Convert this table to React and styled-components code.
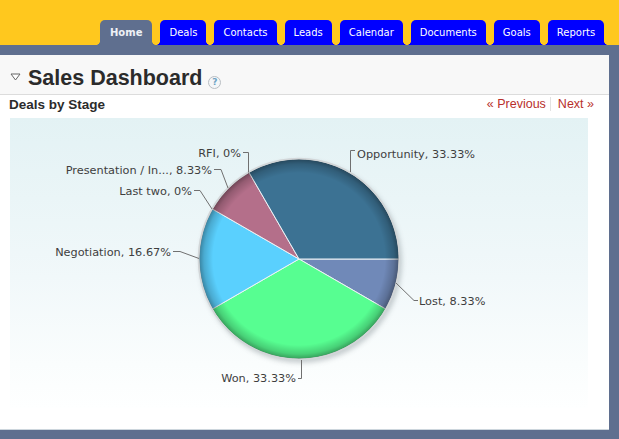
import styled, { createGlobalStyle } from 'styled-components';

const GlobalStyle = createGlobalStyle`
  html, body {
    margin: 0;
    padding: 0;
    background: #5F6F8F;
  }
`;

const SLATE = '#5F6F8F';
const BLUE = '#0000FF';

const Page = styled.div`
  width: 619px;
  height: 439px;
  background: ${SLATE};
  display: flex;
  flex-direction: column;
  overflow: hidden;
`;

const TopBar = styled.div`
  height: 45px;
  background: #FFC81E;
  display: flex;
  align-items: flex-end;
  gap: 8px;
  padding-left: 100px;
  box-sizing: border-box;
`;

const Tab = styled.a`
  position: relative;
  height: 25px;
  padding: 0 ${({ $active }) => ($active ? '10px' : '9px')};
  display: flex;
  align-items: center;
  background: ${({ $active }) => ($active ? SLATE : BLUE)};
  color: ${({ $active }) => ($active ? '#EEF1F6' : '#FFF')};
  font-family: "DejaVu Sans", Verdana, sans-serif;
  font-size: 10px;
  font-weight: ${({ $active }) => ($active ? 700 : 400)};
  border-radius: 5px 5px 0 0;
  text-decoration: none;

  &::before,
  &::after {
    content: '';
    position: absolute;
    bottom: 0;
    width: 4px;
    height: 4px;
  }
  &::before {
    left: -4px;
    background: radial-gradient(circle at 0 0, transparent 3.6px, ${({ $active }) => ($active ? SLATE : BLUE)} 4.2px);
  }
  &::after {
    right: -4px;
    background: radial-gradient(circle at 100% 0, transparent 3.6px, ${({ $active }) => ($active ? SLATE : BLUE)} 4.2px);
  }
`;

const Body = styled.div`
  flex: 1;
  padding: 10px 10px 9px 0;
  display: flex;
`;

const Panel = styled.div`
  flex: 1;
  background: #FFF;
  border-bottom: 1px solid #CDD6DD;
  display: flex;
  flex-direction: column;
`;

const Header = styled.div`
  height: 40px;
  box-sizing: border-box;
  padding: 10px 0 0 10px;
  background: #F8F8F8;
  border-bottom: 1px solid #DCDCDC;
  display: flex;
  align-items: flex-start;
`;

const Toggle = styled.svg`
  width: 11px;
  height: 8px;
  margin-top: 8px;
  margin-right: 7px;
`;

const Title = styled.h1`
  margin: 0;
  font-family: "Liberation Sans", Arial, sans-serif;
  font-size: 21.5px;
  font-weight: 700;
  line-height: 26px;
  color: #2B2B2B;
`;

const Help = styled.span`
  width: 11px;
  height: 11px;
  margin: 11px 0 0 6px;
  border: 1px solid #B9BEC3;
  border-radius: 50%;
  background: #F4F6F8;
  color: #6FA3C4;
  font-family: "DejaVu Sans", sans-serif;
  font-size: 9px;
  font-weight: 700;
  line-height: 11px;
  text-align: center;
`;

const SubBar = styled.div`
  height: 16px;
  margin-top: 1px;
  padding: 0 15px 0 9px;
  display: flex;
  align-items: center;
  justify-content: space-between;
`;

const SubTitle = styled.h2`
  margin: 0;
  font-family: "Liberation Sans", Arial, sans-serif;
  font-size: 13.5px;
  font-weight: 700;
  color: #2B2B2B;
`;

const Pager = styled.div`
  display: flex;
  align-items: center;
  font-family: "Liberation Sans", Arial, sans-serif;
  font-size: 12.5px;
`;

const PagerLink = styled.a`
  color: #B8302C;
  text-decoration: none;
`;

const PagerSep = styled.span`
  width: 1px;
  height: 14px;
  background: #E2E2E2;
  margin: 0 7px 0 4px;
`;

const Chart = styled.div`
  height: 290px;
  margin: 6px 21px 0 10px;
  background: linear-gradient(to bottom, #E3F2F4 0%, #F1F8FA 55%, #FAFDFD 85%, #FEFFFF 100%);
`;

const ChartSvg = styled.svg`
  display: block;
  width: 100%;
  height: 100%;
`;

const ChartLabel = styled.text`
  font-family: "DejaVu Sans", Verdana, sans-serif;
  font-size: 11.3px;
  fill: #3E3E3E;
`;

const tabs = ['Home', 'Deals', 'Contacts', 'Leads', 'Calendar', 'Documents', 'Goals', 'Reports'];

// pie in page coordinates; screen angles, clockwise from east
const CX = 299;
const CY = 258;
const R = 100;

const slices = [
  { name: 'Lost', from: 0, to: 30, color: '#7089B8' },
  { name: 'Won', from: 30, to: 150, color: '#57FE91' },
  { name: 'Negotiation', from: 150, to: 210, color: '#5AD0FE' },
  { name: 'Presentation', from: 210, to: 240, color: '#B46F8A' },
  { name: 'Opportunity', from: 240, to: 360, color: '#3C7293' },
];

const pt = (deg, r = R) => {
  const a = (deg * Math.PI) / 180;
  return [CX + r * Math.cos(a), CY + r * Math.sin(a)];
};

const slicePath = ({ from, to }) => {
  const [x1, y1] = pt(from);
  const [x2, y2] = pt(to);
  const large = to - from > 180 ? 1 : 0;
  return `M${CX},${CY} L${x1},${y1} A${R},${R} 0 ${large} 1 ${x2},${y2} Z`;
};

const labels = [
  { text: 'RFI, 0%', x: 241, y: 156, anchor: 'end', line: 'M243,151.5 H248.5 V171.5' },
  { text: 'Presentation / In..., 8.33%', x: 212, y: 173, anchor: 'end', line: 'M214,168.5 H221 L228,187' },
  { text: 'Last two, 0%', x: 192, y: 194, anchor: 'end', line: 'M194,189.5 H200 L212,208' },
  { text: 'Negotiation, 16.67%', x: 171, y: 255, anchor: 'end', line: 'M173,250.5 H180 L199,257.5' },
  { text: 'Opportunity, 33.33%', x: 357, y: 157, anchor: 'start', line: 'M355,149.5 H350.5 V171' },
  { text: 'Lost, 8.33%', x: 419, y: 304, anchor: 'start', line: 'M396,282 L414,299.5 H418' },
  { text: 'Won, 33.33%', x: 296, y: 381, anchor: 'end', line: 'M298,377.5 H301.5 V359' },
];

const PieChart = () => (
  <ChartSvg viewBox="10 117 578 290">
    <defs>
      <radialGradient id="bevel" cx={CX} cy={CY} r={R} gradientUnits="userSpaceOnUse">
        <stop offset="0.86" stopColor="#000" stopOpacity="0" />
        <stop offset="0.95" stopColor="#000" stopOpacity="0.18" />
        <stop offset="1" stopColor="#000" stopOpacity="0.38" />
      </radialGradient>
      <filter id="shadow" x="-20%" y="-20%" width="140%" height="140%">
        <feGaussianBlur stdDeviation="2.5" />
      </filter>
    </defs>
    <circle cx={CX + 2} cy={CY + 3} r={R + 1} fill="#8A9499" opacity="0.45" filter="url(#shadow)" />
    {slices.map((s) => (
      <path key={s.name} d={slicePath(s)} fill={s.color} stroke="#EEF3F6" strokeWidth="1" />
    ))}
    <circle cx={CX} cy={CY} r={R} fill="url(#bevel)" />
    <circle cx={CX} cy={CY} r={R + 0.5} fill="none" stroke="#D2D6D8" strokeWidth="1.6" />
    {labels.map((l) => (
      <g key={l.text}>
        <path d={l.line} fill="none" stroke="#707070" strokeWidth="1" />
        <ChartLabel x={l.x} y={l.y} textAnchor={l.anchor}>{l.text}</ChartLabel>
      </g>
    ))}
  </ChartSvg>
);

export default function App() {
  return (
    <Page>
      <GlobalStyle />
      <TopBar>
        {tabs.map((t) => (
          <Tab key={t} href="#" $active={t === 'Home'}>{t}</Tab>
        ))}
      </TopBar>
      <Body>
        <Panel>
          <Header>
            <Toggle viewBox="0 0 11 8">
              <path d="M1,1 H10 L5.5,7 Z" fill="#FFF" stroke="#666" strokeWidth="1" strokeLinejoin="round" />
            </Toggle>
            <Title>Sales Dashboard</Title>
            <Help>?</Help>
          </Header>
          <SubBar>
            <SubTitle>Deals by Stage</SubTitle>
            <Pager>
              <PagerLink href="#">« Previous</PagerLink>
              <PagerSep />
              <PagerLink href="#">Next »</PagerLink>
            </Pager>
          </SubBar>
          <Chart>
            <PieChart />
          </Chart>
        </Panel>
      </Body>
    </Page>
  );
}
